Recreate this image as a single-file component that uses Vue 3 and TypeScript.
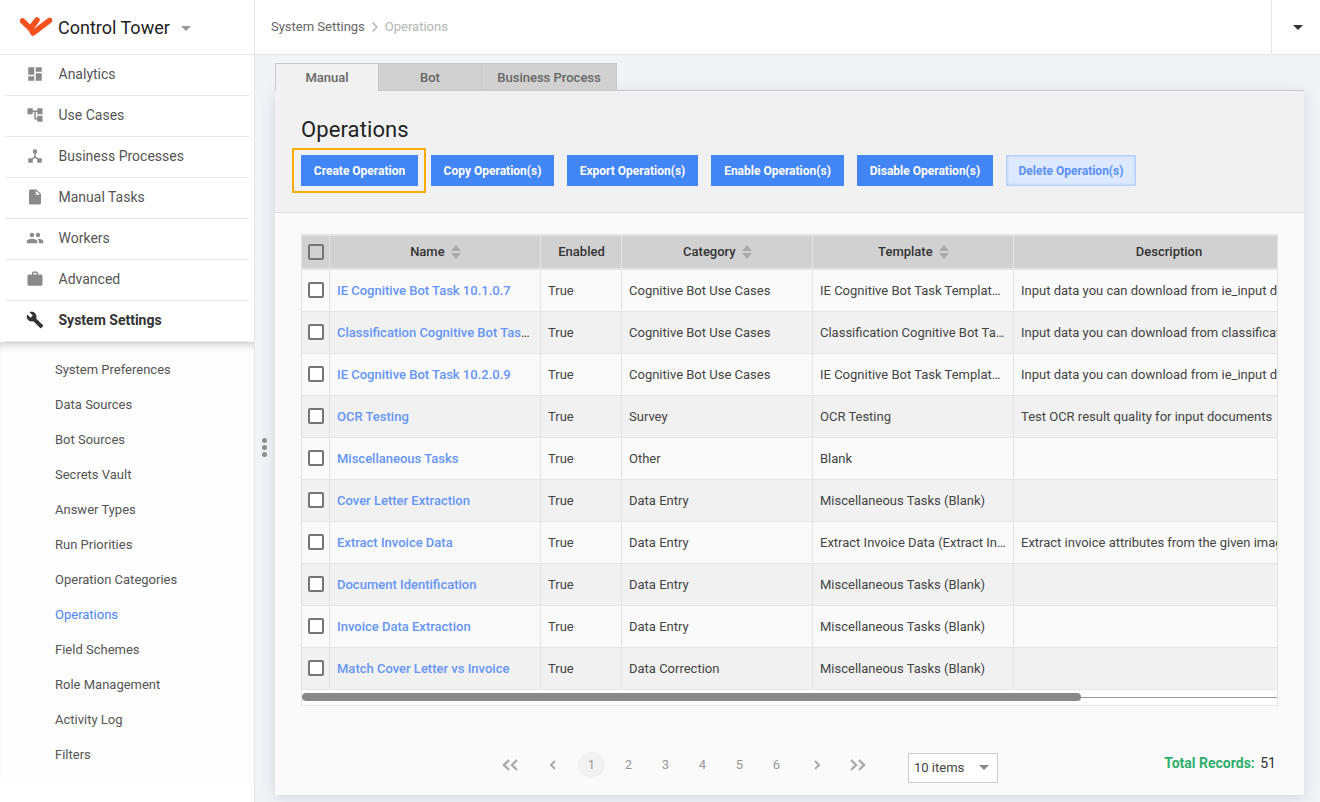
<template>
  <div class="app">
    <aside class="sidebar">
      <div class="brand">
        <svg class="logo" viewBox="0 0 34 22" width="34" height="22">
          <path d="M2.500 5 L10.500 12.500 L17 4" fill="none" stroke="#f4511e" stroke-width="5.500" stroke-linecap="round" stroke-linejoin="round" />
          <path d="M10.500 12.500 L13 17 L29.500 4.500" fill="none" stroke="#f4511e" stroke-width="5.500" stroke-linecap="round" stroke-linejoin="round" />
        </svg>
        <span class="brand-name">Control Tower</span>
        <span class="caret brand-caret"></span>
      </div>

      <nav class="main-nav">
        <a v-for="item in navItems" :key="item.label" class="nav-item" :class="{ active: item.active }">
          <span class="nav-icon">
            <svg viewBox="0 0 24 24" width="18" height="18">
              <path :d="item.icon" :fill="item.active ? '#333' : '#8a8a8a'" />
            </svg>
          </span>
          <span>{{ item.label }}</span>
        </a>
      </nav>

      <ul class="sub-nav">
        <li v-for="sub in subItems" :key="sub" :class="{ current: sub === 'Operations' }">{{ sub }}</li>
      </ul>

      <span class="grip"><i></i><i></i><i></i></span>
    </aside>

    <div class="content">
      <header class="topbar">
        <div class="crumbs">
          <span>System Settings</span>
          <svg class="crumb-sep" viewBox="0 0 8 12" width="8" height="12">
            <path d="M1.500 1.500 L6 6 L1.500 10.500" fill="none" stroke="#aaa" stroke-width="1.200" />
          </svg>
          <span class="crumb-last">Operations</span>
        </div>
        <div class="user-menu"><span class="caret dark"></span></div>
      </header>

      <main class="page">
        <div class="tabs">
          <button v-for="tab in tabs" :key="tab.label" class="tab" :class="{ selected: tab.selected }" :style="{ width: tab.width + 'px' }">
            {{ tab.label }}
          </button>
        </div>

        <section class="card">
          <div class="card-head">
            <h1>Operations</h1>
            <div class="actions">
              <button
                v-for="action in actions"
                :key="action.label"
                class="btn"
                :class="{ focused: action.focused, disabled: action.disabled }"
                :style="{ width: action.width + 'px' }"
              >
                {{ action.label }}
              </button>
            </div>
          </div>

          <div class="card-body">
            <div class="grid-wrap">
              <div class="grid-scroll">
                <table class="grid">
                  <colgroup>
                    <col v-for="(w, i) in colWidths" :key="i" :style="{ width: w + 'px' }" />
                  </colgroup>
                  <thead>
                    <tr>
                      <th><span class="check head-check"></span></th>
                      <th v-for="col in columns" :key="col.label">
                        {{ col.label }}
                        <svg v-if="col.sort" class="sort" viewBox="0 0 10 14" width="10" height="14">
                          <path d="M5 0 L10 6 H0 Z M0 8 H10 L5 14 Z" fill="#a9a9a9" />
                        </svg>
                      </th>
                    </tr>
                  </thead>
                  <tbody>
                    <tr v-for="row in rows" :key="row.name">
                      <td><span class="check"></span></td>
                      <td><a class="link">{{ row.name }}</a></td>
                      <td>True</td>
                      <td>{{ row.category }}</td>
                      <td>{{ row.template }}</td>
                      <td class="desc">{{ row.description }}</td>
                    </tr>
                  </tbody>
                </table>
              </div>
              <div class="scrollbar"><div class="thumb"></div></div>
            </div>

            <div class="pager-row">
              <div class="pager">
                <span class="pg first">
                  <svg viewBox="0 0 18 12" width="18" height="12"><path d="M7 1 L2 6 L7 11 M15 1 L10 6 L15 11" /></svg>
                </span>
                <span class="pg prev">
                  <svg viewBox="0 0 8 12" width="8" height="12"><path d="M6 2 L2 6 L6 10" /></svg>
                </span>
                <span v-for="n in 6" :key="n" class="pg" :class="{ on: n === 1 }">{{ n }}</span>
                <span class="pg next">
                  <svg viewBox="0 0 8 12" width="8" height="12"><path d="M2 2 L6 6 L2 10" /></svg>
                </span>
                <span class="pg last">
                  <svg viewBox="0 0 18 12" width="18" height="12"><path d="M3 1 L8 6 L3 11 M11 1 L16 6 L11 11" /></svg>
                </span>
              </div>
              <div class="page-size">10 items<span class="caret"></span></div>
              <div class="total"><b>Total Records:</b> 51</div>
            </div>
          </div>
        </section>
      </main>
    </div>
  </div>
</template>

<script setup lang="ts">
type NavItem = { label: string; icon: string; active?: boolean };

const navItems: NavItem[] = [
  { label: 'Analytics', icon: 'M3 13h8V3H3v10zm0 8h8v-6H3v6zm10 0h8V11h-8v10zm0-18v6h8V3h-8z' },
  { label: 'Use Cases', icon: 'M22 11V3h-7v3H9V3H2v8h7V8h2v10h4v3h7v-8h-7v3h-2V8h2v3z' },
  {
    label: 'Business Processes',
    icon: 'M11 8h2v4.500l5.300 3.800-1.200 1.600L12 14.300l-5.100 3.600-1.200-1.600L11 12.500zM12 3a3 3 0 1 1 0 6a3 3 0 1 1 0-6zM3 15h6v6H3zM15 15h6v6h-6z',
  },
  { label: 'Manual Tasks', icon: 'M6 2c-1.100 0-1.990.9-1.990 2L4 20c0 1.100.89 2 1.990 2H18c1.100 0 2-.9 2-2V8l-6-6H6zm7 7V3.500L18.500 9H13z' },
  {
    label: 'Workers',
    icon: 'M16 11c1.660 0 2.990-1.340 2.990-3S17.660 5 16 5c-1.660 0-3 1.340-3 3s1.340 3 3 3zm-8 0c1.660 0 2.990-1.340 2.990-3S9.660 5 8 5C6.340 5 5 6.340 5 8s1.340 3 3 3zm0 2c-2.330 0-7 1.170-7 3.500V19h14v-2.500c0-2.330-4.670-3.500-7-3.500zm8 0c-.29 0-.62.02-.97.05 1.160.84 1.970 1.970 1.970 3.450V19h6v-2.500c0-2.330-4.670-3.500-7-3.500z',
  },
  {
    label: 'Advanced',
    icon: 'M20 6h-4V4c0-1.110-.89-2-2-2h-4c-1.110 0-2 .89-2 2v2H4c-1.110 0-1.990.89-1.990 2L2 19c0 1.110.89 2 2 2h16c1.110 0 2-.89 2-2V8c0-1.110-.89-2-2-2zm-6 0h-4V4h4v2z',
  },
  {
    label: 'System Settings',
    active: true,
    icon: 'M22.700 19l-9.100-9.100c.9-2.300.4-5-1.500-6.900-2-2-5-2.400-7.400-1.300L9 6 6 9 1.600 4.700C.4 7.100.9 10.100 2.900 12.100c1.900 1.900 4.600 2.400 6.900 1.500l9.100 9.100c.4.4 1 .4 1.400 0l2.300-2.300c.5-.4.5-1.100.1-1.400z',
  },
];

const subItems = [
  'System Preferences',
  'Data Sources',
  'Bot Sources',
  'Secrets Vault',
  'Answer Types',
  'Run Priorities',
  'Operation Categories',
  'Operations',
  'Field Schemes',
  'Role Management',
  'Activity Log',
  'Filters',
];

const tabs = [
  { label: 'Manual', width: 104, selected: true },
  { label: 'Bot', width: 103 },
  { label: 'Business Process', width: 135 },
];

const actions = [
  { label: 'Create Operation', width: 117, focused: true },
  { label: 'Copy Operation(s)', width: 123 },
  { label: 'Export Operation(s)', width: 131 },
  { label: 'Enable Operation(s)', width: 133 },
  { label: 'Disable Operation(s)', width: 136 },
  { label: 'Delete Operation(s)', width: 130, disabled: true },
];

const colWidths = [27, 211, 81, 191, 201, 310];

const columns = [
  { label: 'Name', sort: true },
  { label: 'Enabled', sort: false },
  { label: 'Category', sort: true },
  { label: 'Template', sort: true },
  { label: 'Description', sort: false },
];

const rows = [
  {
    name: 'IE Cognitive Bot Task 10.1.0.7',
    category: 'Cognitive Bot Use Cases',
    template: 'IE Cognitive Bot Task Template 10.1',
    description: 'Input data you can download from ie_input data folder',
  },
  {
    name: 'Classification Cognitive Bot Task 10.1',
    category: 'Cognitive Bot Use Cases',
    template: 'Classification Cognitive Bot Task Template',
    description: 'Input data you can download from classification folder',
  },
  {
    name: 'IE Cognitive Bot Task 10.2.0.9',
    category: 'Cognitive Bot Use Cases',
    template: 'IE Cognitive Bot Task Template 10.2',
    description: 'Input data you can download from ie_input data folder',
  },
  { name: 'OCR Testing', category: 'Survey', template: 'OCR Testing', description: 'Test OCR result quality for input documents' },
  { name: 'Miscellaneous Tasks', category: 'Other', template: 'Blank', description: '' },
  { name: 'Cover Letter Extraction', category: 'Data Entry', template: 'Miscellaneous Tasks (Blank)', description: '' },
  {
    name: 'Extract Invoice Data',
    category: 'Data Entry',
    template: 'Extract Invoice Data (Extract Invoice)',
    description: 'Extract invoice attributes from the given image files',
  },
  { name: 'Document Identification', category: 'Data Entry', template: 'Miscellaneous Tasks (Blank)', description: '' },
  { name: 'Invoice Data Extraction', category: 'Data Entry', template: 'Miscellaneous Tasks (Blank)', description: '' },
  { name: 'Match Cover Letter vs Invoice', category: 'Data Correction', template: 'Miscellaneous Tasks (Blank)', description: '' },
];
</script>

<style>
html,
body {
  margin: 0;
  height: 100%;
  overflow: hidden;
  background: #f1f3f7;
}
</style>

<style scoped>
.app {
  display: flex;
  height: 802px;
  font-family: Roboto, 'Liberation Sans', sans-serif;
  font-size: 13px;
  color: #444;
}

/* sidebar */
.sidebar {
  position: relative;
  flex: 0 0 254px;
  background: #fff;
  border-right: 1px solid #e6e6e6;
}
.brand {
  display: flex;
  align-items: center;
  height: 54px;
  padding-left: 20px;
  border-bottom: 1px solid #e6e6e6;
}
.logo {
  margin-right: 4px;
}
.brand-name {
  padding-top: 1px;
  font-size: 18px;
  color: #222;
}
.caret {
  display: inline-block;
  width: 0;
  height: 0;
  border-left: 5px solid transparent;
  border-right: 5px solid transparent;
  border-top: 5px solid #888;
}
.caret.dark {
  border-top-color: #333;
}
.brand-caret {
  margin-left: 11px;
  margin-top: 3px;
  border-top-color: #999;
}
.main-nav {
  padding: 0 5px;
  background: #fff;
}
.nav-item {
  display: flex;
  align-items: center;
  box-sizing: content-box;
  height: 38px;
  padding-bottom: 2px;
  border-bottom: 1px solid #e6e6e6;
  color: #555;
  font-size: 14px;
}
.nav-item.active {
  font-weight: 700;
  color: #333;
}
.nav-icon {
  display: flex;
  justify-content: center;
  align-items: center;
  box-sizing: border-box;
  width: 53.500px;
  padding-left: 7px;
}
.sub-nav {
  list-style: none;
  margin: 0;
  padding: 10px 0 10px 55px;
  background: #fdfdfd;
  box-shadow: inset 0 9px 8px -7px rgba(0, 0, 0, 0.22);
}
.sub-nav li {
  height: 35px;
  line-height: 35px;
  font-size: 13px;
  color: #555;
}
.sub-nav li.current {
  color: #4a86f7;
}
.grip {
  position: absolute;
  left: 262px;
  top: 438px;
  display: flex;
  flex-direction: column;
  gap: 2px;
}
.grip i {
  width: 5px;
  height: 5px;
  border-radius: 50%;
  background: #8e8e8e;
}

/* top bar */
.content {
  flex: 1;
  min-width: 0;
}
.topbar {
  display: flex;
  justify-content: space-between;
  align-items: center;
  box-sizing: content-box;
  height: 54px;
  background: #fff;
  border-bottom: 1px solid #e6e6e6;
}
.crumbs {
  display: flex;
  align-items: center;
  gap: 6px;
  padding: 0 0 1px 16px;
  color: #666;
}
.crumb-last {
  color: #b5b5b5;
}
.user-menu {
  display: flex;
  align-items: center;
  justify-content: center;
  box-sizing: border-box;
  width: 49px;
  height: 54px;
  padding-left: 4px;
  border-left: 1px solid #e6e6e6;
}

/* page */
.page {
  padding: 8px 16px 0 20px;
}
.tabs {
  display: flex;
  align-items: flex-start;
  height: 27px;
}
.tab {
  box-sizing: border-box;
  height: 27px;
  margin: 0;
  padding: 0;
  background: #d1d1d1;
  border: 1px solid #c8c8c8;
  border-bottom: none;
  border-left: none;
  font: 500 13px Roboto, sans-serif;
  color: #666;
}
.tab.selected {
  position: relative;
  z-index: 1;
  height: 28px;
  padding-bottom: 1px;
  background: #f1f1f1;
  border-left: 1px solid #c8c8c8;
}
.card {
  height: 705px;
  background: #fafafa;
  box-shadow: 0 3px 14px rgba(60, 70, 90, 0.16);
  display: flex;
  flex-direction: column;
}
.card-head {
  box-sizing: border-box;
  height: 123px;
  padding: 26px 26px 0;
  background: #f1f1f1;
  border-top: 1px solid #c8c8c8;
  border-bottom: 1px solid #dedede;
}
.card-head h1 {
  margin: 0 0 12px;
  font-size: 22px;
  font-weight: 400;
  letter-spacing: 0.1px;
  line-height: 26px;
  color: #222;
}
.actions {
  display: flex;
  gap: 13px;
}
.btn {
  position: relative;
  box-sizing: border-box;
  height: 31px;
  padding: 0;
  border: none;
  background: #4285f4;
  color: #fff;
  font: 700 12px Roboto, sans-serif;
}
.btn.focused::after {
  content: '';
  position: absolute;
  inset: -7px -8px -7px -9px;
  border: 2px solid #f9ab00;
}
.btn.disabled {
  background: #dce9fe;
  border: 1px solid #b4cffb;
  box-shadow: inset 0 0 3px #a9c8fb;
  color: #5a8ff7;
}

/* grid */
.card-body {
  flex: 1;
  padding: 21px 26px 0;
}
.grid-wrap {
  width: 977px;
  border: 1px solid #e4e4e4;
  box-sizing: border-box;
  background: #fff;
}
.grid-scroll {
  overflow: hidden;
}
.grid {
  table-layout: fixed;
  border-collapse: collapse;
  width: 1021px;
  background: #fafafa;
}
.grid th {
  height: 31px;
  padding: 0 0 1px 2px;
  background: #d1d1d1;
  font-weight: 500;
  font-size: 13px;
  color: #333;
  border-right: 1px solid #e4e4e4;
  border-bottom: 2px solid #e4e4e4;
  border-top: 1px solid #e4e4e4;
}
.grid td {
  box-sizing: border-box;
  height: 42px;
  padding: 0 6px 0 7.500px;
  border-right: 1px solid #e4e4e4;
  border-bottom: 1px solid #e4e4e4;
  white-space: nowrap;
  overflow: hidden;
  text-overflow: ellipsis;
  font-size: 13px;
  color: #444;
}
.grid tbody tr:nth-child(even) td {
  background: #f1f1f1;
}
.grid td:first-child {
  padding: 0 0 0 2px;
  text-align: center;
}
.grid .desc {
  text-overflow: clip;
}
.link {
  color: #6595f6;
  font-weight: 500;
}
.check {
  display: block;
  box-sizing: border-box;
  width: 16px;
  height: 16px;
  margin: 0 auto;
  border: 2px solid #757575;
  border-radius: 2px;
  background: #fff;
}
.head-check {
  background: transparent;
}
.sort {
  margin-left: 3px;
  vertical-align: -3px;
}
.scrollbar {
  position: relative;
  height: 15px;
}
.scrollbar::before {
  content: '';
  position: absolute;
  left: 0;
  right: 0;
  top: 7px;
  height: 1px;
  background: #999;
}
.thumb {
  position: absolute;
  left: 0;
  top: 3px;
  width: 779px;
  height: 8px;
  border-radius: 4px;
  background: #888;
}

/* pager */
.pager-row {
  display: flex;
  align-items: flex-start;
  margin-top: 46px;
}
.pager {
  display: flex;
  align-items: center;
  gap: 10px;
  height: 26px;
  margin-left: 196px;
  color: #999;
  font-size: 13px;
}
.pg {
  display: flex;
  align-items: center;
  justify-content: center;
  width: 27px;
  height: 26px;
}
.pg svg {
  fill: none;
  stroke: #aaa;
  stroke-width: 2;
}
.pg.first svg,
.pg.last svg {
  stroke-width: 2.400;
}
.pg.first {
  margin-right: 5px;
}
.pg.prev {
  margin-right: 2px;
}
.pg.next {
  margin-left: 3px;
  margin-right: 3px;
}
.pg.on {
  background: #f1f1f1;
  border-radius: 50%;
}
.page-size {
  box-sizing: border-box;
  display: flex;
  align-items: center;
  justify-content: space-between;
  width: 90px;
  height: 30px;
  margin-left: 38px;
  margin-top: 1px;
  padding: 0 8px 0 5px;
  border: 1px solid #ccc;
  background: #fff;
  color: #444;
}
.total {
  margin-left: auto;
  margin-right: 2px;
  font-size: 14px;
  color: #333;
  line-height: 22px;
}
.total b {
  color: #2eaf6e;
  margin-right: 2px;
}
</style>
